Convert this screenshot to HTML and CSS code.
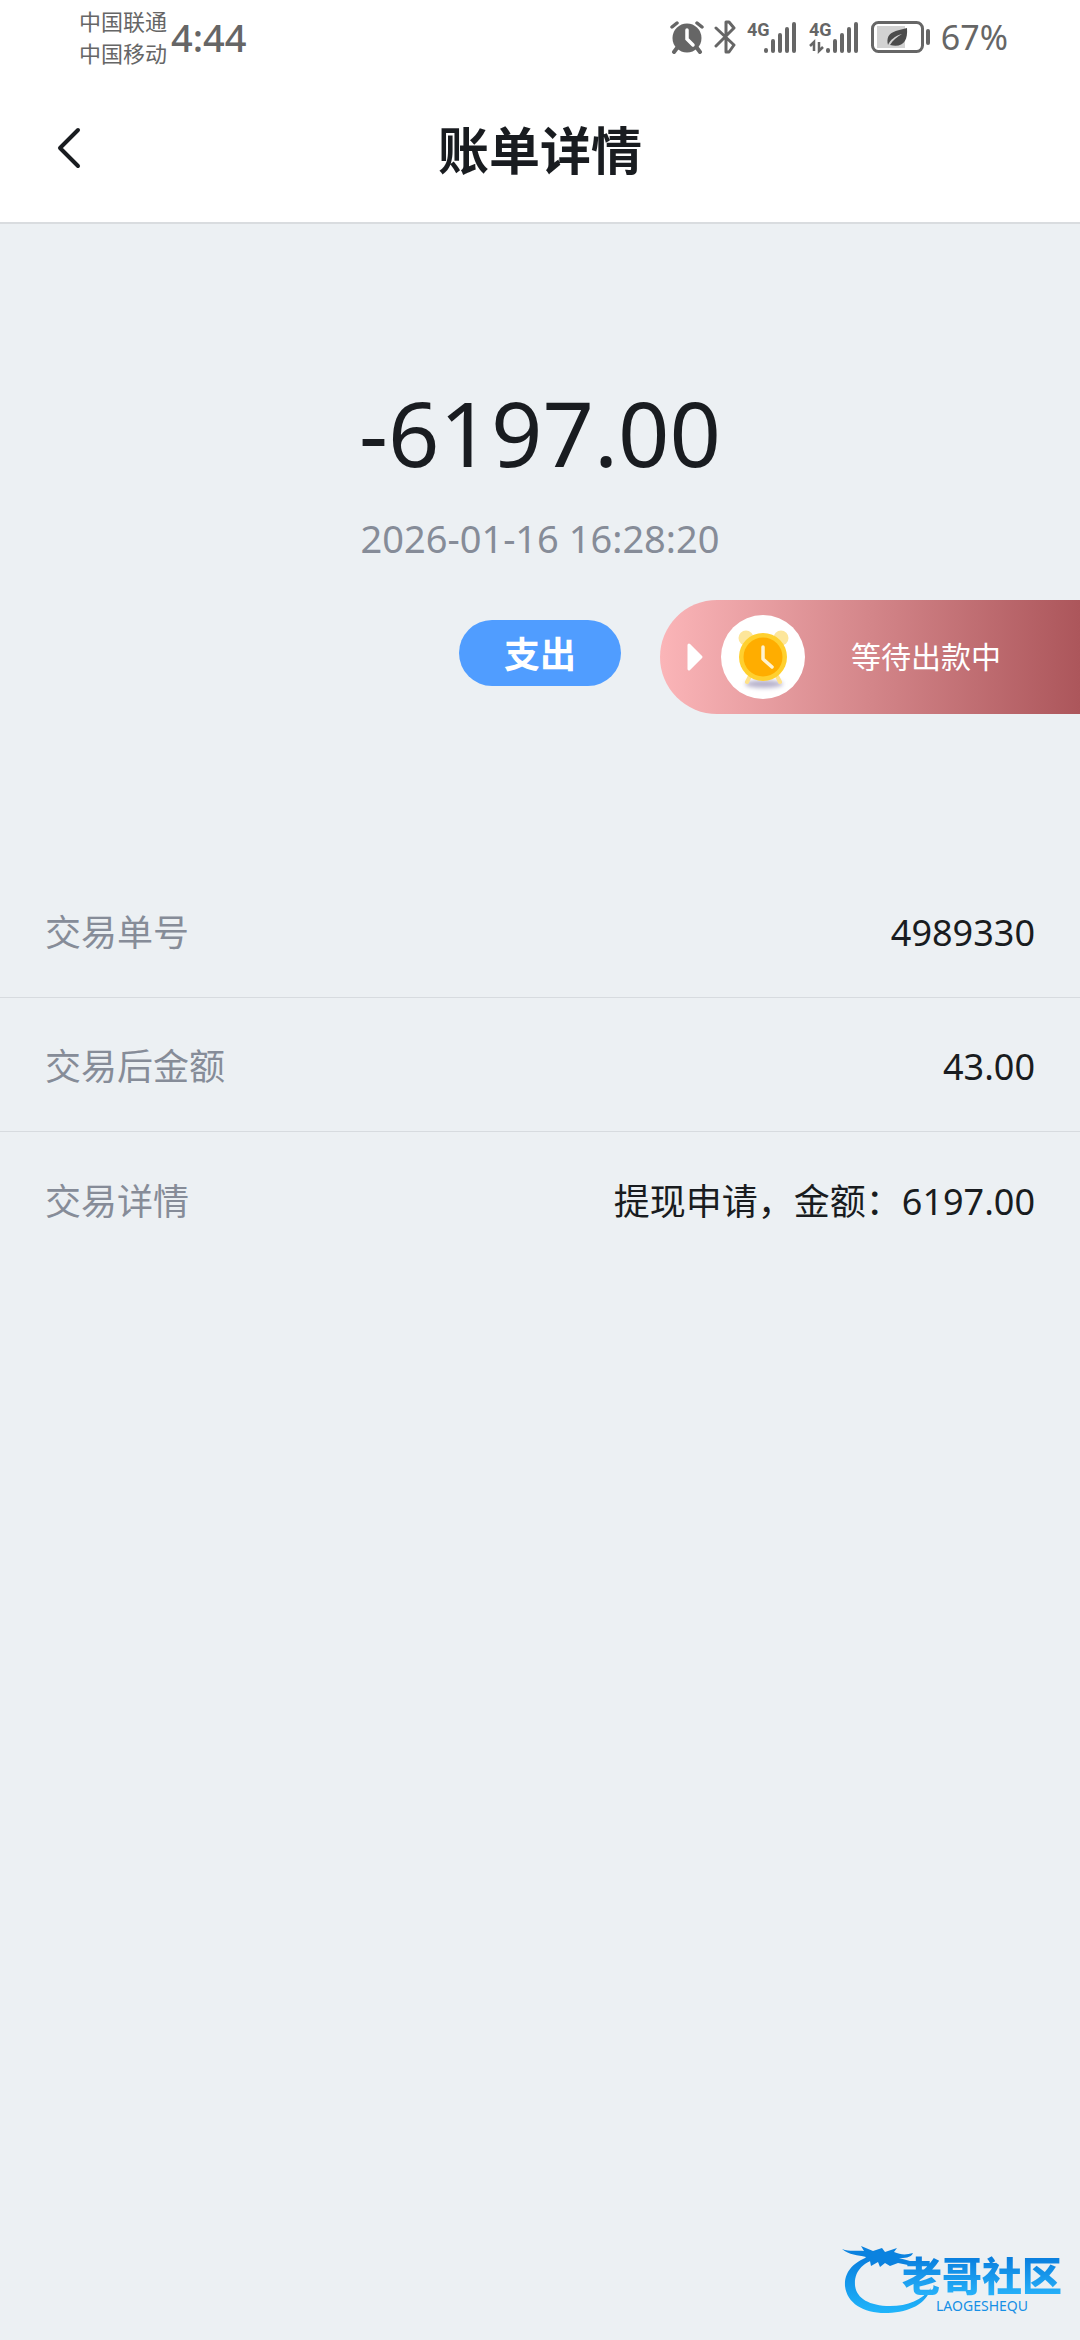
FILE: index.html
```html
<!DOCTYPE html>
<html lang="zh-CN">
<head>
<meta charset="utf-8">
<meta name="viewport" content="width=device-width, initial-scale=1">
<title>账单详情</title>
<link rel="stylesheet" href="styles.css">
</head>
<body>
<div class="status-bar">
  <div class="carriers"><span>中国联通</span><span>中国移动</span></div>
  <time class="clock">4:44</time>
  <div class="status-icons">
    <svg width="34" height="34" viewBox="0 0 34 34" fill="none" stroke="currentColor" stroke-linecap="round">
      <circle cx="17" cy="18" r="14.500" fill="currentColor" stroke="none"/>
      <path d="M2 7l5-4M32 7l-5-4" stroke-width="3.500"/>
      <path d="M7 28l-3 4M27 28l3 4" stroke-width="4"/>
      <path d="M17 10v9l6 6" stroke="#fff" stroke-width="3.500"/>
    </svg>
    <svg class="bluetooth" width="22" height="36" viewBox="0 0 22 36" fill="none" stroke="currentColor" stroke-width="3" stroke-linecap="round" stroke-linejoin="round">
      <path d="M2 9l18 17-5 7h-3V3h3l5 6L2 27"/>
    </svg>
    <svg class="signal" width="51" height="34" viewBox="0 0 51 34">
      <text class="network" x="0" y="16">4G</text>
      <path d="M19 30v1M26 21v10M33 15v16M40 9v22M47 4v27" stroke="currentColor" stroke-width="4" stroke-linecap="round"/>
    </svg>
    <svg class="signal" width="51" height="34" viewBox="0 0 51 34">
      <text class="network" x="0" y="16">4G</text>
      <path d="M19 30v1M26 21v10M33 15v16M40 9v22M47 4v27" stroke="currentColor" stroke-width="4" stroke-linecap="round"/>
      <path d="M1 26l4-4v9M10 22v9l4-4" fill="none" stroke="currentColor" stroke-width="2.500"/>
    </svg>
    <svg class="battery" width="60" height="34" viewBox="0 0 60 34">
      <rect x="6" y="6" width="28" height="22" fill="#d2d2d2"/>
      <rect x="1.500" y="2.500" width="50" height="29" rx="6" fill="none" stroke="currentColor" stroke-width="3"/>
      <path d="M57 11v12" stroke="currentColor" stroke-width="4" stroke-linecap="round"/>
      <path d="M36 8c1 13-4 20-17 17 3-5 7-8 12-11-7 2-12 6-14 11-3-14 9-14 19-17z" fill="#4c4c4c"/>
    </svg>
    <span class="charge">67%</span>
  </div>
</div>

<header class="header">
  <button class="back" type="button" aria-label="返回">
    <svg width="26" height="44" viewBox="0 0 26 44" fill="none" stroke="currentColor" stroke-width="4" stroke-linecap="round" stroke-linejoin="round"><path d="M22 4L4 22l18 18"/></svg>
  </button>
  <h1 class="title">账单详情</h1>
</header>

<main>
  <section class="summary">
    <p class="amount">-6197.00</p>
    <time class="date">2026-01-16 16:28:20</time>
    <span class="badge">支出</span>
    <button class="payout" type="button">
      <svg class="arrow" width="18" height="30" viewBox="0 0 18 30"><path d="M3 3l12 12L3 27z" fill="#fff" stroke="#fff" stroke-width="3" stroke-linejoin="round"/></svg>
      <svg class="alarm" width="84" height="84" viewBox="0 0 84 84">
        <defs><filter id="soft" x="-20%" y="-60%" width="140%" height="220%"><feGaussianBlur stdDeviation="2"/></filter></defs>
        <circle cx="42" cy="42" r="42" fill="#fff"/>
        <ellipse cx="43" cy="69" rx="19" ry="4" fill="#b8b3cc" filter="url(#soft)"/>
        <circle cx="25" cy="23" r="7.500" fill="#fde69a"/><circle cx="60" cy="23" r="7.500" fill="#fde69a"/>
        <path d="M29 61l-3 6M56 61l3 6" stroke="#ffe28a" stroke-width="4" stroke-linecap="round"/>
        <circle cx="42" cy="42" r="24" fill="#ffd02f"/>
        <circle cx="42" cy="42" r="19.500" fill="#ffad00"/>
        <path d="M42 32v12l9 8" fill="none" stroke="#fff3cf" stroke-width="3.500" stroke-linecap="round" stroke-linejoin="round"/>
      </svg>
      <span>等待出款中</span>
    </button>
  </section>

  <dl class="details">
    <div class="row"><dt>交易单号</dt><dd>4989330</dd></div>
    <div class="row"><dt>交易后金额</dt><dd>43.00</dd></div>
    <div class="row"><dt>交易详情</dt><dd>提现申请，金额：6197.00</dd></div>
  </dl>
</main>

<div class="watermark">
  <svg class="dragon" width="94" height="76" viewBox="0 0 94 76">
    <defs><linearGradient id="sea" x1="0" y1="0" x2="0" y2="1"><stop offset="0" stop-color="#087bdc"/><stop offset="1" stop-color="#20b5fb"/></linearGradient></defs>
    <path d="M36 9C13 14 2 26 3 41c2 18 20 28 43 27 22-1 38-9 43-25-9 12-23 18-41 18-21 0-34-8-35-21C12 26 22 16 38 13z" fill="url(#sea)"/>
    <path d="M0 4c8 3 15 1 22 2l-3-5 12 5 9-3 3 4 12-4-3 4c7 3 12 3 19 1-2 5-9 5-14 5l11 3-2 4-10-2-8 3-5-3-5 4-2-5-7 4-1-5-8 2 4-6C16 10 7 10 0 4z" fill="#0b82df"/>
  </svg>
  <div class="wordmark"><strong>老哥社区</strong><span>LAOGESHEQU</span></div>
</div>
</body>
</html>
```
FILE: styles.css
```css
* { box-sizing: border-box; }

body {
  position: relative;
  min-height: 100vh;
  margin: 0;
  background: #ecf0f3;
  color: #191c20;
  font-family: "Noto Sans", "Noto Sans CJK SC", sans-serif;
  font-size: 36px;
  line-height: 48px;
}

button {
  padding: 0;
  border: 0;
  background: none;
  color: inherit;
  font: inherit;
}

svg { display: block; flex: none; }

.status-bar {
  display: flex;
  align-items: center;
  height: 74px;
  padding: 0 72px 0 79px;
  background: #fff;
  color: #666;
}

.carriers {
  display: flex;
  flex-direction: column;
  font-size: 22px;
  line-height: 32px;
}

.clock {
  margin-left: 4px;
  font-size: 38px;
  font-weight: 500;
}

.status-icons {
  display: flex;
  align-items: center;
  margin-left: auto;
}

.bluetooth { margin-left: 10px; }
.signal { margin-left: 11px; }
.battery { margin-left: 11px; }
.charge { margin-left: 10px; font-size: 34px; }

.network {
  fill: currentColor;
  font: bold 18px "Liberation Sans Narrow", Roboto, sans-serif;
}

.header {
  display: grid;
  grid-template-columns: 1fr auto 1fr;
  align-items: center;
  height: 150px;
  padding: 0 56px;
  border-bottom: 2px solid #d9dcdf;
  background: #fff;
}

.back { justify-self: start; }

.title {
  margin: 0;
  padding-top: 4px;
  font-size: 51px;
  line-height: 64px;
}

.summary {
  position: relative;
  display: flex;
  flex-direction: column;
  align-items: center;
  padding: 158px 0 178px;
}

.amount {
  margin: 0;
  font-size: 90px;
  line-height: 100px;
}

.date {
  margin-top: 32px;
  color: #868c98;
  font-size: 38px;
}

.badge {
  width: 162px;
  height: 66px;
  margin-top: 58px;
  padding-top: 2px;
  border-radius: 33px;
  background: #509dff;
  color: #fff;
  font-weight: bold;
  line-height: 66px;
  text-align: center;
}

.payout {
  position: absolute;
  top: 376px;
  right: 0;
  display: flex;
  align-items: center;
  width: 420px;
  height: 114px;
  padding-left: 26px;
  border-radius: 57px 0 0 57px;
  background: linear-gradient(90deg, #fbb5b8, #ac565b);
  color: #fff;
  font-size: 30px;
}

.alarm { margin: 0 46px 0 17px; }

.details { margin: 0; }

.row {
  display: flex;
  align-items: center;
  justify-content: space-between;
  height: 134px;
  padding: 5px 45px 0;
  border-bottom: 1px solid #d7dbdf;
}

.row:last-child { border-bottom: 0; }
.row dt { color: #868c98; }
.row dd { margin: 0; }

.watermark {
  position: absolute;
  right: 18px;
  bottom: 19px;
  display: flex;
  align-items: flex-start;
}

.dragon { margin-right: -34px; }

.wordmark {
  position: relative;
  display: flex;
  flex-direction: column;
  align-items: center;
  padding-top: 10px;
  color: #168fe5;
}

.wordmark strong {
  background: linear-gradient(#087bdc, #28b4fb);
  background-clip: text;
  color: transparent;
  font-size: 40px;
  font-weight: 900;
  line-height: 42px;
}

.wordmark span {
  font-size: 14px;
  line-height: 18px;
}
```
